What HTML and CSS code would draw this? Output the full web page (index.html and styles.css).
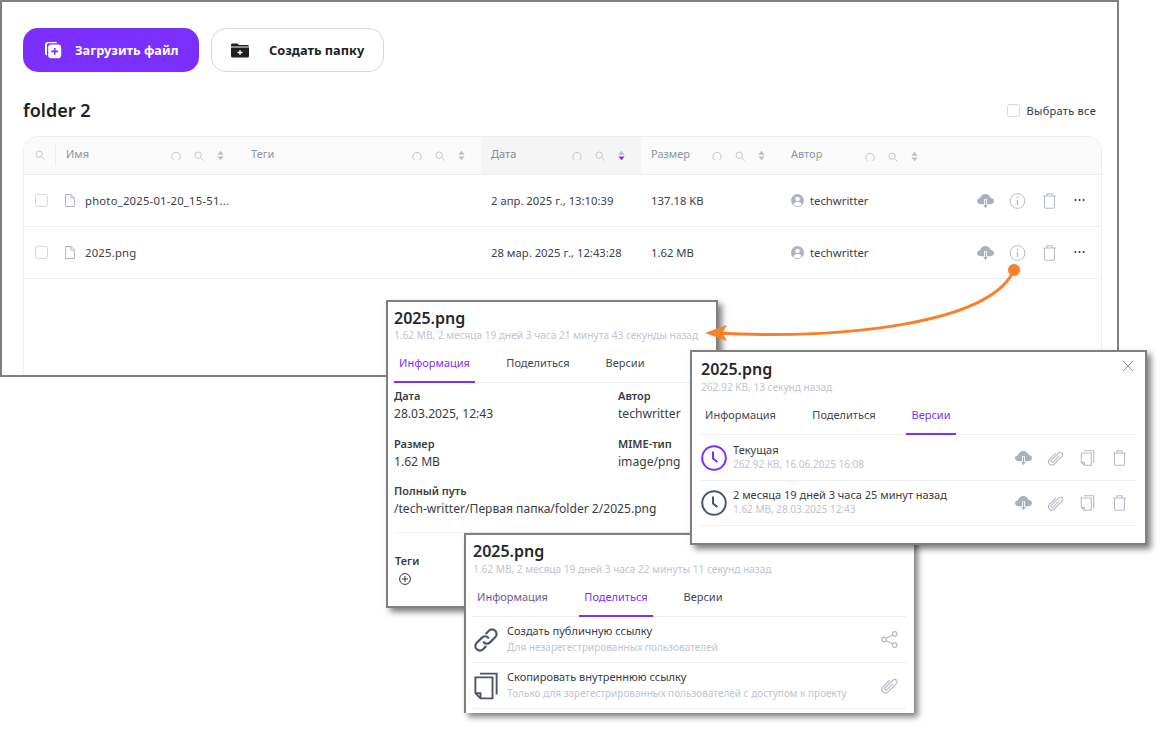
FILE: index.html
```html
<!DOCTYPE html>
<html lang="ru">
<head>
    <meta charset="UTF-8">
    <title>folder 2</title>
    <link rel="stylesheet" href="styles.css">
</head>
<body>
    <svg class="sprite">
        <symbol id="i-search" viewBox="0 0 12 12"><circle cx="5" cy="5" r="3.8" fill="none" stroke="currentColor"/><path d="M7.800 7.800L11.500 11.500" stroke="currentColor" fill="none"/></symbol>
        <symbol id="i-reset" viewBox="0 0 12 12"><path d="M3.200 10.800A5 5 0 1 1 8.800 10.800" fill="none" stroke="currentColor"/></symbol>
        <symbol id="i-sort" viewBox="0 0 8 12"><path d="M4 .5L7.500 5H.5z" fill="currentColor"/><path d="M4 11.500L7.500 7H.5z" fill="currentColor"/></symbol>
        <symbol id="i-file" viewBox="0 0 10 13"><path d="M.6.5h5.600L9.400 3.800V12.500H.6z M6 .5V4h3.400" fill="none" stroke="currentColor" stroke-width=".9"/></symbol>
        <symbol id="i-user" viewBox="0 0 14 14"><circle cx="7" cy="7" r="7" fill="currentColor"/><circle cx="7" cy="5.400" r="2.500" fill="#fff"/><path d="M2.600 11.400C3.400 9.200 5 8.600 7 8.600s3.600.6 4.400 2.800A6 6 0 0 1 2.600 11.400z" fill="#fff"/></symbol>
        <symbol id="i-cloud" viewBox="0 0 18 16"><path d="M4.200 11.400C1.800 11.400 0 10 0 8.100c0-1.600 1.300-2.900 3.200-3.100C3.800 2.400 6 .6 8.800.6c2.900 0 5 1.800 5.700 4.200 2.200.1 3.500 1.500 3.500 3.300 0 1.900-1.700 3.300-4 3.300z" fill="currentColor"/><path d="M9 6v7" stroke="#fff" stroke-width="3"/><path d="M9 6.500v6" stroke="currentColor" stroke-width="1.200"/><path d="M6.600 12.300H11.400L9 15.600z" fill="currentColor"/></symbol>
        <symbol id="i-info" viewBox="0 0 16 16"><circle cx="8" cy="8" r="7.400" fill="none" stroke="currentColor"/><path d="M8 7v5" stroke="currentColor" stroke-width="1.300"/><circle cx="8" cy="4.600" r=".9" fill="currentColor"/></symbol>
        <symbol id="i-trash" viewBox="0 0 14 16"><path d="M.5 3h13M4.500 3V.8h5V3M2 3v10.800c0 .9.5 1.400 1.400 1.400h7.200c.9 0 1.400-.5 1.400-1.400V3" fill="none" stroke="currentColor" stroke-width="1.100"/></symbol>
        <symbol id="i-clip" viewBox="1.500 1.500 13 13"><path transform="rotate(45 8 8)" d="M5.300 5v7.200a2.700 2.700 0 0 0 5.400 0V3.200a1.900 1.900 0 0 0-3.800 0V11.500a1 1 0 0 0 2 0V5" fill="none" stroke="currentColor" stroke-width=".9"/></symbol>
        <symbol id="i-copy" viewBox="0 0 14 16"><path d="M3.500.8H13.200V13M.8 3H10.800V15.200H3.800L.8 12.200zM.8 12.200H3.800V15.200" fill="none" stroke="currentColor" stroke-width="1.100"/></symbol>
        <symbol id="i-clock" viewBox="0 0 26 26"><circle cx="13" cy="13" r="11.800" fill="none" stroke="currentColor" stroke-width="2"/><path d="M12 6.500V13.500L16.500 17" fill="none" stroke="currentColor" stroke-width="2"/></symbol>
        <symbol id="i-link" viewBox="0 0 24 24"><path d="M10 14.200c1.800 1.800 4.200 1.500 5.700 0l4.800-4.800c1.700-1.700 1.700-4.200 0-5.900s-4.200-1.700-5.900 0l-2.400 2.400" fill="none" stroke="currentColor" stroke-width="2" stroke-linecap="round"/><path d="M14 9.800c-1.800-1.800-4.200-1.500-5.700 0l-4.800 4.800c-1.700 1.700-1.700 4.200 0 5.900s4.200 1.700 5.900 0l2.400-2.400" fill="none" stroke="currentColor" stroke-width="2" stroke-linecap="round"/></symbol>
        <symbol id="i-share" viewBox="0 0 14 14"><circle cx="2.500" cy="7" r="1.900" fill="none" stroke="currentColor"/><circle cx="11.300" cy="2.400" r="1.900" fill="none" stroke="currentColor"/><circle cx="11.300" cy="11.600" r="1.900" fill="none" stroke="currentColor"/><path d="M4.200 6.100l5.400-2.800M4.200 7.900l5.400 2.800" stroke="currentColor" fill="none"/></symbol>
        <symbol id="i-plus-circle" viewBox="0 0 12 12"><circle cx="6" cy="6" r="5.400" fill="none" stroke="currentColor"/><path d="M6 3v6M3 6h6" stroke="currentColor"/></symbol>
        <symbol id="i-more" viewBox="0 0 12 4"><circle cx="1.500" cy="2" r="1.100" fill="currentColor"/><circle cx="6" cy="2" r="1.100" fill="currentColor"/><circle cx="10.500" cy="2" r="1.100" fill="currentColor"/></symbol>
    </svg>

    <div class="canvas">
        <div class="app-window">
            <div class="toolbar">
                <button class="btn btn--primary">
                    <svg class="btn__icon" viewBox="0 0 18 18">
                        <path d="M3 14.500C1.500 14 1 13 1 12V4c0-1.800 1.200-3 3-3h7c1.200 0 2 .5 2.400 1.300H4.500C3.500 2.300 3 3 3 4z" fill="#fff"/>
                        <rect x="4.200" y="3.600" width="13" height="13.600" rx="3" fill="#fff"/>
                        <path d="M10.700 7v6.800M7.300 10.400h6.800" stroke="#7b2fff" stroke-width="1.600"/>
                    </svg>
                    <span>Загрузить файл</span>
                </button>
                <button class="btn btn--outline">
                    <svg class="btn__icon btn__icon--folder" viewBox="0 0 18 14">
                        <path d="M0 1.500C0 .6.600 0 1.500 0h5L8 1.500h8.500c.9 0 1.500.6 1.500 1.500H0z" fill="#1f1f24"/>
                        <path d="M0 4h18v8.500c0 .9-.6 1.500-1.500 1.500h-15C.6 14 0 13.400 0 12.500z" fill="#1f1f24"/>
                        <path d="M9 6.500v5M6.500 9h5" stroke="#fff" stroke-width="1.300"/>
                    </svg>
                    <span>Создать папку</span>
                </button>
            </div>

            <div class="heading-row">
                <h1 class="folder-title">folder 2</h1>
                <label class="select-all"><span class="checkbox"></span>Выбрать все</label>
            </div>

            <div class="file-table">
                <div class="table-head">
                    <div class="head-cell head-cell--search"><svg class="tool"><use href="#i-search"></use></svg></div>
                    <div class="head-cell">
                        <span class="head-label">Имя</span>
                        <span class="head-tools">
                            <svg class="tool"><use href="#i-reset"></use></svg>
                            <svg class="tool"><use href="#i-search"></use></svg>
                            <svg class="tool tool--sort"><use href="#i-sort"></use></svg>
                        </span>
                    </div>
                    <div class="head-cell head-cell--tags">
                        <span class="head-label">Теги</span>
                        <span class="head-tools">
                            <svg class="tool"><use href="#i-reset"></use></svg>
                            <svg class="tool"><use href="#i-search"></use></svg>
                            <svg class="tool tool--sort"><use href="#i-sort"></use></svg>
                        </span>
                    </div>
                    <div class="head-cell head-cell--active">
                        <span class="head-label">Дата</span>
                        <span class="head-tools">
                            <svg class="tool"><use href="#i-reset"></use></svg>
                            <svg class="tool"><use href="#i-search"></use></svg>
                            <svg class="tool tool--sort" viewBox="0 0 8 12"><path d="M4 .5L7.500 5H.5z" fill="#b9bec9"/><path d="M4 11.500L7.500 7H.5z" fill="#7b2fff"/></svg>
                        </span>
                    </div>
                    <div class="head-cell">
                        <span class="head-label">Размер</span>
                        <span class="head-tools">
                            <svg class="tool"><use href="#i-reset"></use></svg>
                            <svg class="tool"><use href="#i-search"></use></svg>
                            <svg class="tool tool--sort"><use href="#i-sort"></use></svg>
                        </span>
                    </div>
                    <div class="head-cell head-cell--author">
                        <span class="head-label">Автор</span>
                        <span class="head-tools">
                            <svg class="tool"><use href="#i-reset"></use></svg>
                            <svg class="tool"><use href="#i-search"></use></svg>
                            <svg class="tool tool--sort"><use href="#i-sort"></use></svg>
                        </span>
                    </div>
                </div>

                <div class="table-row">
                    <div class="cell cell--check"><span class="checkbox"></span></div>
                    <div class="cell cell--name"><svg class="file-icon"><use href="#i-file"></use></svg>photo_2025-01-20_15-51...</div>
                    <div class="cell"></div>
                    <div class="cell cell--date">2 апр. 2025 г., 13:10:39</div>
                    <div class="cell cell--size">137.18 KB</div>
                    <div class="cell cell--author"><svg class="avatar"><use href="#i-user"></use></svg>techwritter</div>
                    <div class="cell cell--actions">
                        <svg class="act act--cloud"><use href="#i-cloud"></use></svg>
                        <svg class="act"><use href="#i-info"></use></svg>
                        <svg class="act"><use href="#i-trash"></use></svg>
                        <svg class="more"><use href="#i-more"></use></svg>
                    </div>
                </div>
                <div class="table-row">
                    <div class="cell cell--check"><span class="checkbox"></span></div>
                    <div class="cell cell--name"><svg class="file-icon"><use href="#i-file"></use></svg>2025.png</div>
                    <div class="cell"></div>
                    <div class="cell cell--date">28 мар. 2025 г., 12:43:28</div>
                    <div class="cell cell--size">1.62 MB</div>
                    <div class="cell cell--author"><svg class="avatar"><use href="#i-user"></use></svg>techwritter</div>
                    <div class="cell cell--actions">
                        <svg class="act act--cloud"><use href="#i-cloud"></use></svg>
                        <svg class="act"><use href="#i-info"></use></svg>
                        <svg class="act"><use href="#i-trash"></use></svg>
                        <svg class="more"><use href="#i-more"></use></svg>
                    </div>
                </div>
            </div>
        </div>

        <!-- information tab -->
        <section class="panel panel--info">
            <h2 class="panel__title">2025.png</h2>
            <p class="panel__meta">1.62 MB, 2 месяца 19 дней 3 часа 21 минута 43 секунды назад</p>
            <div class="tabs">
                <span class="tab tab--info tab--active">Информация</span>
                <span class="tab tab--share">Поделиться</span>
                <span class="tab tab--versions">Версии</span>
            </div>
            <div class="details">
                <div class="detail">
                    <div class="detail__label">Дата</div>
                    <div class="detail__value">28.03.2025, 12:43</div>
                </div>
                <div class="detail">
                    <div class="detail__label">Автор</div>
                    <div class="detail__value">techwritter</div>
                </div>
                <div class="detail">
                    <div class="detail__label">Размер</div>
                    <div class="detail__value">1.62 MB</div>
                </div>
                <div class="detail">
                    <div class="detail__label">MIME-тип</div>
                    <div class="detail__value">image/png</div>
                </div>
                <div class="detail detail--wide">
                    <div class="detail__label">Полный путь</div>
                    <div class="detail__value">/tech-writter/Первая папка/folder 2/2025.png</div>
                </div>
            </div>
            <div class="tags">
                <div class="detail__label">Теги</div>
                <svg class="tags__add"><use href="#i-plus-circle"></use></svg>
            </div>
        </section>

        <!-- share tab -->
        <section class="panel panel--share">
            <h2 class="panel__title">2025.png</h2>
            <p class="panel__meta">1.62 MB, 2 месяца 19 дней 3 часа 22 минуты 11 секунд назад</p>
            <div class="tabs">
                <span class="tab tab--info tab--visited">Информация</span>
                <span class="tab tab--share tab--active">Поделиться</span>
                <span class="tab tab--versions">Версии</span>
            </div>
            <div class="list-row">
                <svg class="list-row__icon"><use href="#i-link"></use></svg>
                <div class="list-row__text list-row__text--share">
                    <div class="list-row__title">Создать публичную ссылку</div>
                    <div class="list-row__sub">Для незарегестрированных пользователей</div>
                </div>
                <div class="list-row__actions">
                    <svg class="act act--small"><use href="#i-share"></use></svg>
                </div>
            </div>
            <div class="list-row">
                <svg class="list-row__icon list-row__icon--copy"><use href="#i-copy"></use></svg>
                <div class="list-row__text list-row__text--share">
                    <div class="list-row__title">Скопировать внутреннюю ссылку</div>
                    <div class="list-row__sub">Только для зарегестрированных пользователей с доступом к проекту</div>
                </div>
                <div class="list-row__actions">
                    <svg class="act act--small"><use href="#i-clip"></use></svg>
                </div>
            </div>
        </section>

        <!-- versions tab -->
        <section class="panel panel--versions">
            <svg class="panel__close" viewBox="0 0 12 12"><path d="M1 1l10 10M11 1L1 11" stroke="currentColor" fill="none"/></svg>
            <h2 class="panel__title">2025.png</h2>
            <p class="panel__meta">262.92 KB, 13 секунд назад</p>
            <div class="tabs">
                <span class="tab tab--info">Информация</span>
                <span class="tab tab--share">Поделиться</span>
                <span class="tab tab--versions tab--active">Версии</span>
            </div>
            <div class="list-row">
                <svg class="list-row__icon list-row__icon--current"><use href="#i-clock"></use></svg>
                <div class="list-row__text">
                    <div class="list-row__title">Текущая</div>
                    <div class="list-row__sub">262.92 KB, 16.06.2025 16:08</div>
                </div>
                <div class="list-row__actions">
                    <svg class="act act--cloud"><use href="#i-cloud"></use></svg>
                    <svg class="act"><use href="#i-clip"></use></svg>
                    <svg class="act"><use href="#i-copy"></use></svg>
                    <svg class="act"><use href="#i-trash"></use></svg>
                </div>
            </div>
            <div class="list-row">
                <svg class="list-row__icon"><use href="#i-clock"></use></svg>
                <div class="list-row__text">
                    <div class="list-row__title">2 месяца 19 дней 3 часа 25 минут назад</div>
                    <div class="list-row__sub">1.62 MB, 28.03.2025 12:43</div>
                </div>
                <div class="list-row__actions">
                    <svg class="act act--cloud"><use href="#i-cloud"></use></svg>
                    <svg class="act"><use href="#i-clip"></use></svg>
                    <svg class="act"><use href="#i-copy"></use></svg>
                    <svg class="act"><use href="#i-trash"></use></svg>
                </div>
            </div>
        </section>

        <svg class="callout" viewBox="0 0 1162 733">
            <circle cx="1014" cy="270" r="6" fill="#fb7f28"/>
            <path d="M1012 274C985 322 850 340 716 333" fill="none" stroke="#fb7f28" stroke-width="3"/>
            <path d="M705 333L727 325L722 333L727 341z" fill="#fb7f28"/>
        </svg>
    </div>
</body>
</html>
```

FILE: styles.css
```css
* {
    box-sizing: border-box;
}

body {
    margin: 0;
    background: #fff;
    font-family: "Noto Sans", Roboto, sans-serif;
    color: #33363d;
}

.sprite {
    display: none;
}

.canvas {
    position: relative;
    width: 1162px;
    height: 733px;
    overflow: hidden;
}

.app-window {
    position: absolute;
    left: 0;
    top: 0;
    width: 1119px;
    height: 377px;
    border: 2px solid #808080;
    overflow: hidden;
    background: #fff;
    padding: 26px 15px 0 21px;
}

.callout {
    position: absolute;
    left: 0;
    top: 0;
    width: 1162px;
    height: 733px;
    pointer-events: none;
}

/* toolbar */
.toolbar {
    display: flex;
    gap: 12px;
}

.btn {
    display: flex;
    align-items: center;
    height: 44px;
    border-radius: 15px;
    font-family: inherit;
    font-size: 12.8px;
    font-weight: 700;
    padding: 0;
}

.btn--primary {
    width: 176px;
    background: #7b2fff;
    border: none;
    color: #fff;
    padding-left: 21px;
    gap: 13px;
}

.btn--outline {
    width: 173px;
    background: #fff;
    border: 1px solid #d9d9dc;
    color: #1f1f24;
    padding-left: 19px;
    gap: 20px;
}

.btn__icon {
    width: 18px;
    height: 18px;
}

.btn__icon--folder {
    height: 15px;
}

.heading-row {
    display: flex;
    justify-content: space-between;
    align-items: center;
    margin-top: 24px;
    height: 28px;
    padding-right: 6px;
}

.folder-title {
    margin: 0;
    font-size: 18px;
    font-weight: 600;
    color: #222;
}

.select-all {
    display: flex;
    align-items: center;
    gap: 7px;
    font-size: 11px;
    letter-spacing: .28px;
}

.checkbox {
    display: block;
    width: 13px;
    height: 13px;
    border: 1px solid #d6d8dc;
    border-radius: 3px;
    background: #fff;
}

/* table */
.file-table {
    margin-top: 12px;
    width: 1079px;
    border: 1px solid #eceef0;
    border-bottom: none;
    border-radius: 15px 15px 0 0;
    height: 300px;
    overflow: hidden;
}

.table-head,
.table-row {
    display: grid;
    grid-template-columns: 32px 184px 241px 160px 140px 320px;
}

.table-head {
    height: 38px;
    background: #fafafa;
    border-bottom: 1px solid #eceef0;
}

.table-row {
    position: relative;
    height: 52px;
    border-bottom: 1px solid #eceef0;
}

.head-cell {
    display: flex;
    align-items: center;
    padding: 0 16px 0 10px;
    font-size: 11px;
    color: #8d94a3;
}

.head-cell--search {
    justify-content: center;
    padding: 0;
    border-right: 1px solid #eeeeee;
    height: 22px;
    margin-top: 7px;
}

.head-cell--tags {
    padding-left: 11px;
}

.head-cell--active {
    background: #f5f5f5;
}

.head-cell--active .head-label {
    color: #7b8a9a;
}

.head-cell--author .head-tools {
    margin-left: 43px;
    margin-right: auto;
    margin-top: 2px;
}

.head-label {
    margin-top: -5px;
}

.head-tools {
    display: flex;
    align-items: center;
    gap: 13px;
    margin-left: auto;
    margin-top: 0;
}

.tool {
    display: block;
    width: 10px;
    height: 10px;
    color: #b9bec9;
}

.tool--sort {
    width: 7px;
    height: 11px;
}

.cell {
    display: flex;
    align-items: center;
    padding-bottom: 1px;
    font-size: 11.3px;
    color: #3d4047;
}

.cell--check {
    justify-content: center;
    padding-left: 3px;
}

.cell--name {
    padding-left: 9px;
    letter-spacing: .2px;
}

.file-icon {
    flex: none;
    width: 10px;
    height: 13px;
    margin-right: 10px;
    color: #a9aeb9;
}

.cell--date {
    padding-left: 10px;
}

.cell--size {
    padding-left: 10px;
}

.cell--author {
    padding-left: 10px;
}

.avatar {
    width: 13px;
    height: 13px;
    margin-right: 6px;
    color: #aeb4bf;
}

.cell--actions {
    position: absolute;
    left: 953px;
    top: 0;
    width: 125px;
    height: 52px;
    padding-bottom: 0;
    display: flex;
    align-items: center;
    gap: 15px;
}

.act {
    width: 17px;
    height: 16px;
    color: #b6bcc6;
}

.act--cloud {
    color: #aab1bc;
}

.act--small {
    width: 17px;
    height: 17px;
}

.more {
    width: 11px;
    height: 4px;
    margin-left: 1px;
    margin-top: -2px;
    color: #333;
}

/* floating panels */
.panel {
    position: absolute;
    background: #fff;
    border: 2px solid #808080;
    box-shadow: 4px 4px 6px rgba(0, 0, 0, .5);
    padding: 6px 8px 0 6px;
}

.panel--info {
    left: 386px;
    top: 300px;
    width: 332px;
    height: 308px;
}

.panel--versions {
    left: 690px;
    top: 350px;
    width: 457px;
    height: 195px;
    padding: 7px 9px 0;
}

.panel--share {
    left: 464px;
    top: 533px;
    width: 450px;
    height: 180px;
    padding-left: 7px;
    border-right: none;
    border-bottom: none;
}

.panel__title {
    margin: 0;
    font-size: 16px;
    line-height: 20px;
    font-weight: 600;
    color: #26282c;
}

.panel--versions .panel__title {
    line-height: 21px;
}

.panel__meta {
    margin: 0;
    font-size: 10.15px;
    line-height: 15px;
    color: #c0c5cf;
    white-space: nowrap;
}

.panel--share .panel__meta {
    line-height: 16px;
}

.panel__close {
    position: absolute;
    right: 11px;
    top: 8px;
    width: 12px;
    height: 12px;
    color: #8d919a;
}

.tabs {
    display: flex;
    gap: 26px;
    height: 40px;
    border-bottom: 1px solid #eceef0;
}

.panel--versions .tab--info,
.panel--share .tab--info {
    margin-left: -1px;
}

.tab {
    display: flex;
    align-items: center;
    justify-content: center;
    height: 40px;
    font-size: 11px;
    color: #44474e;
    border-bottom: 2px solid transparent;
}

.tab--info {
    width: 81px;
}

.tab--share {
    width: 74px;
}

.tab--versions {
    width: 50px;
    margin-left: -1px;
}

.tab--active {
    color: #7b2fff;
    border-bottom-color: #7b2fff;
}

.tab--visited {
    color: #6d5a94;
}

.details {
    display: grid;
    grid-template-columns: 224px 1fr;
    row-gap: 10.5px;
    padding-top: 5px;
    padding-bottom: 12px;
    border-bottom: 1px solid #eceef0;
}

.detail--wide {
    grid-column: 1 / span 2;
}

.detail__label {
    font-size: 11px;
    line-height: 15px;
    font-weight: 600;
    color: #3a3c42;
}

.detail__value {
    font-size: 12.1px;
    line-height: 22px;
    color: #3a3c42;
    white-space: nowrap;
}

.tags {
    padding-top: 20px;
    padding-left: 1px;
}

.tags__add {
    display: block;
    width: 12px;
    height: 12px;
    margin: 5px 0 0 4px;
    color: #333;
}

.list-row {
    display: flex;
    align-items: center;
    height: 46px;
    border-bottom: 1px solid #eceef0;
}

.panel--versions .list-row:last-child {
    height: 45px;
}

.list-row__icon {
    width: 26px;
    height: 26px;
    color: #4a5568;
    flex: none;
}

.list-row__icon--current {
    color: #7b2fff;
}

.list-row__icon--copy {
    width: 24px;
    height: 28px;
    margin: 0 1px;
}

.list-row__text {
    margin-left: 6px;
    margin-top: -2px;
    flex: 1;
}

.list-row__text--share {
    margin-left: 8px;
    margin-top: -1px;
}

.list-row__title {
    font-size: 11px;
    line-height: 15px;
    color: #3a3c42;
}

.list-row__sub {
    font-size: 10px;
    line-height: 15px;
    color: #c0c5cf;
}

.list-row__text--share .list-row__title,
.list-row__text--share .list-row__sub {
    line-height: 17px;
}

.list-row__actions {
    display: flex;
    align-items: center;
    gap: 15px;
    padding-right: 8px;
}
```
